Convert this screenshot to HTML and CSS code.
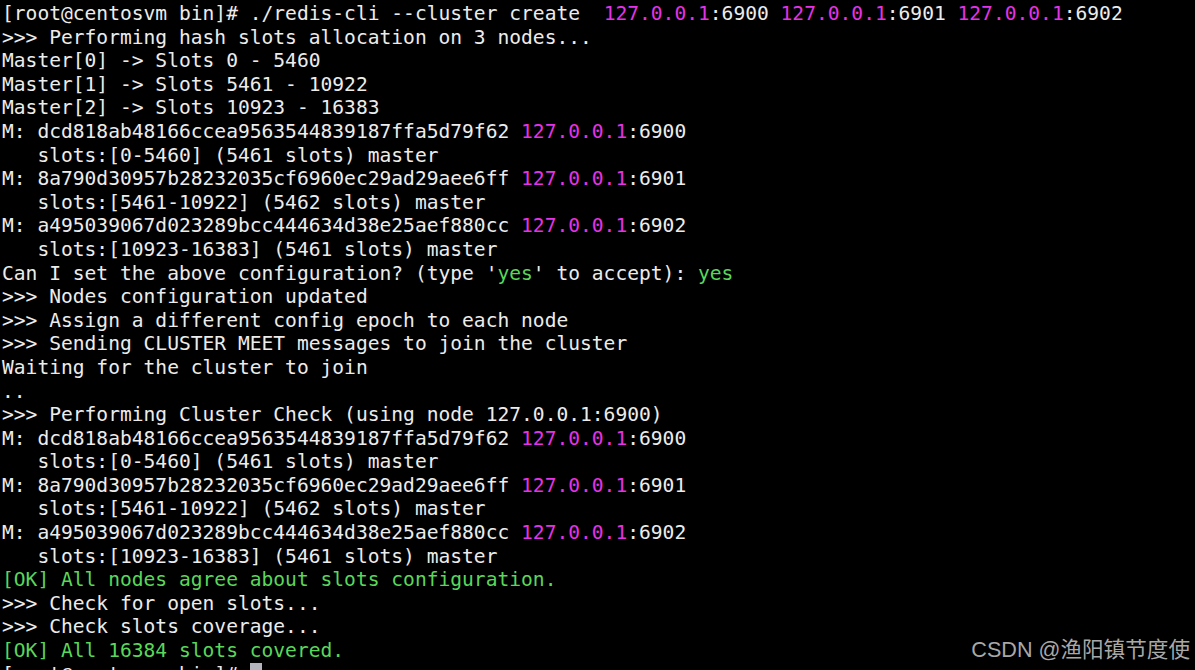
FILE: index.html
```html
<!DOCTYPE html>
<html lang="zh">
<head>
<meta charset="utf-8">
<title>redis-cli cluster create</title>
<link rel="stylesheet" href="styles.css">
</head>
<body>
<div class="term">
<pre class="out">[root@centosvm bin]# ./redis-cli --cluster create  <span class="ip">127.0.0.1</span>:6900 <span class="ip">127.0.0.1</span>:6901 <span class="ip">127.0.0.1</span>:6902
&gt;&gt;&gt; Performing hash slots allocation on 3 nodes...
Master[0] -&gt; Slots 0 - 5460
Master[1] -&gt; Slots 5461 - 10922
Master[2] -&gt; Slots 10923 - 16383
M: dcd818ab48166ccea9563544839187ffa5d79f62 <span class="ip">127.0.0.1</span>:6900
   slots:[0-5460] (5461 slots) master
M: 8a790d30957b28232035cf6960ec29ad29aee6ff <span class="ip">127.0.0.1</span>:6901
   slots:[5461-10922] (5462 slots) master
M: a495039067d023289bcc444634d38e25aef880cc <span class="ip">127.0.0.1</span>:6902
   slots:[10923-16383] (5461 slots) master
Can I set the above configuration? (type '<span class="ok">yes</span>' to accept): <span class="ok">yes</span>
&gt;&gt;&gt; Nodes configuration updated
&gt;&gt;&gt; Assign a different config epoch to each node
&gt;&gt;&gt; Sending CLUSTER MEET messages to join the cluster
Waiting for the cluster to join
..
&gt;&gt;&gt; Performing Cluster Check (using node 127.0.0.1:6900)
M: dcd818ab48166ccea9563544839187ffa5d79f62 <span class="ip">127.0.0.1</span>:6900
   slots:[0-5460] (5461 slots) master
M: 8a790d30957b28232035cf6960ec29ad29aee6ff <span class="ip">127.0.0.1</span>:6901
   slots:[5461-10922] (5462 slots) master
M: a495039067d023289bcc444634d38e25aef880cc <span class="ip">127.0.0.1</span>:6902
   slots:[10923-16383] (5461 slots) master
<span class="ok">[OK] All nodes agree about slots configuration.</span>
&gt;&gt;&gt; Check for open slots...
&gt;&gt;&gt; Check slots coverage...
<span class="ok">[OK] All 16384 slots covered.</span>
[root@centosvm bin]# <span class="cursor"> </span></pre>
<div class="watermark">CSDN @渔阳镇节度使</div>
</div>
</body>
</html>
```
FILE: styles.css
```css
html, body {
  margin: 0;
  padding: 0;
  background: #000;
  width: 1195px;
  height: 670px;
  overflow: hidden;
}
.term {
  position: relative;
  width: 1195px;
  height: 670px;
  background: #000;
  overflow: hidden;
}
.out {
  margin: 0;
  padding: 2px 0 0 2px;
  font-family: "DejaVu Sans Mono", monospace;
  font-size: 19.6px;
  line-height: 23.6px;
  color: #ececec;
  white-space: pre;
}
.ip {
  color: #e632e6;
}
.ok {
  color: #5ad75a;
}
.cursor {
  background: #b4b4bc;
}
.watermark {
  position: absolute;
  right: 5px;
  top: 636px;
  font-family: "Liberation Sans", "Noto Sans CJK SC", sans-serif;
  font-size: 21.6px;
  line-height: 28px;
  color: #a8a8a8;
}
```
